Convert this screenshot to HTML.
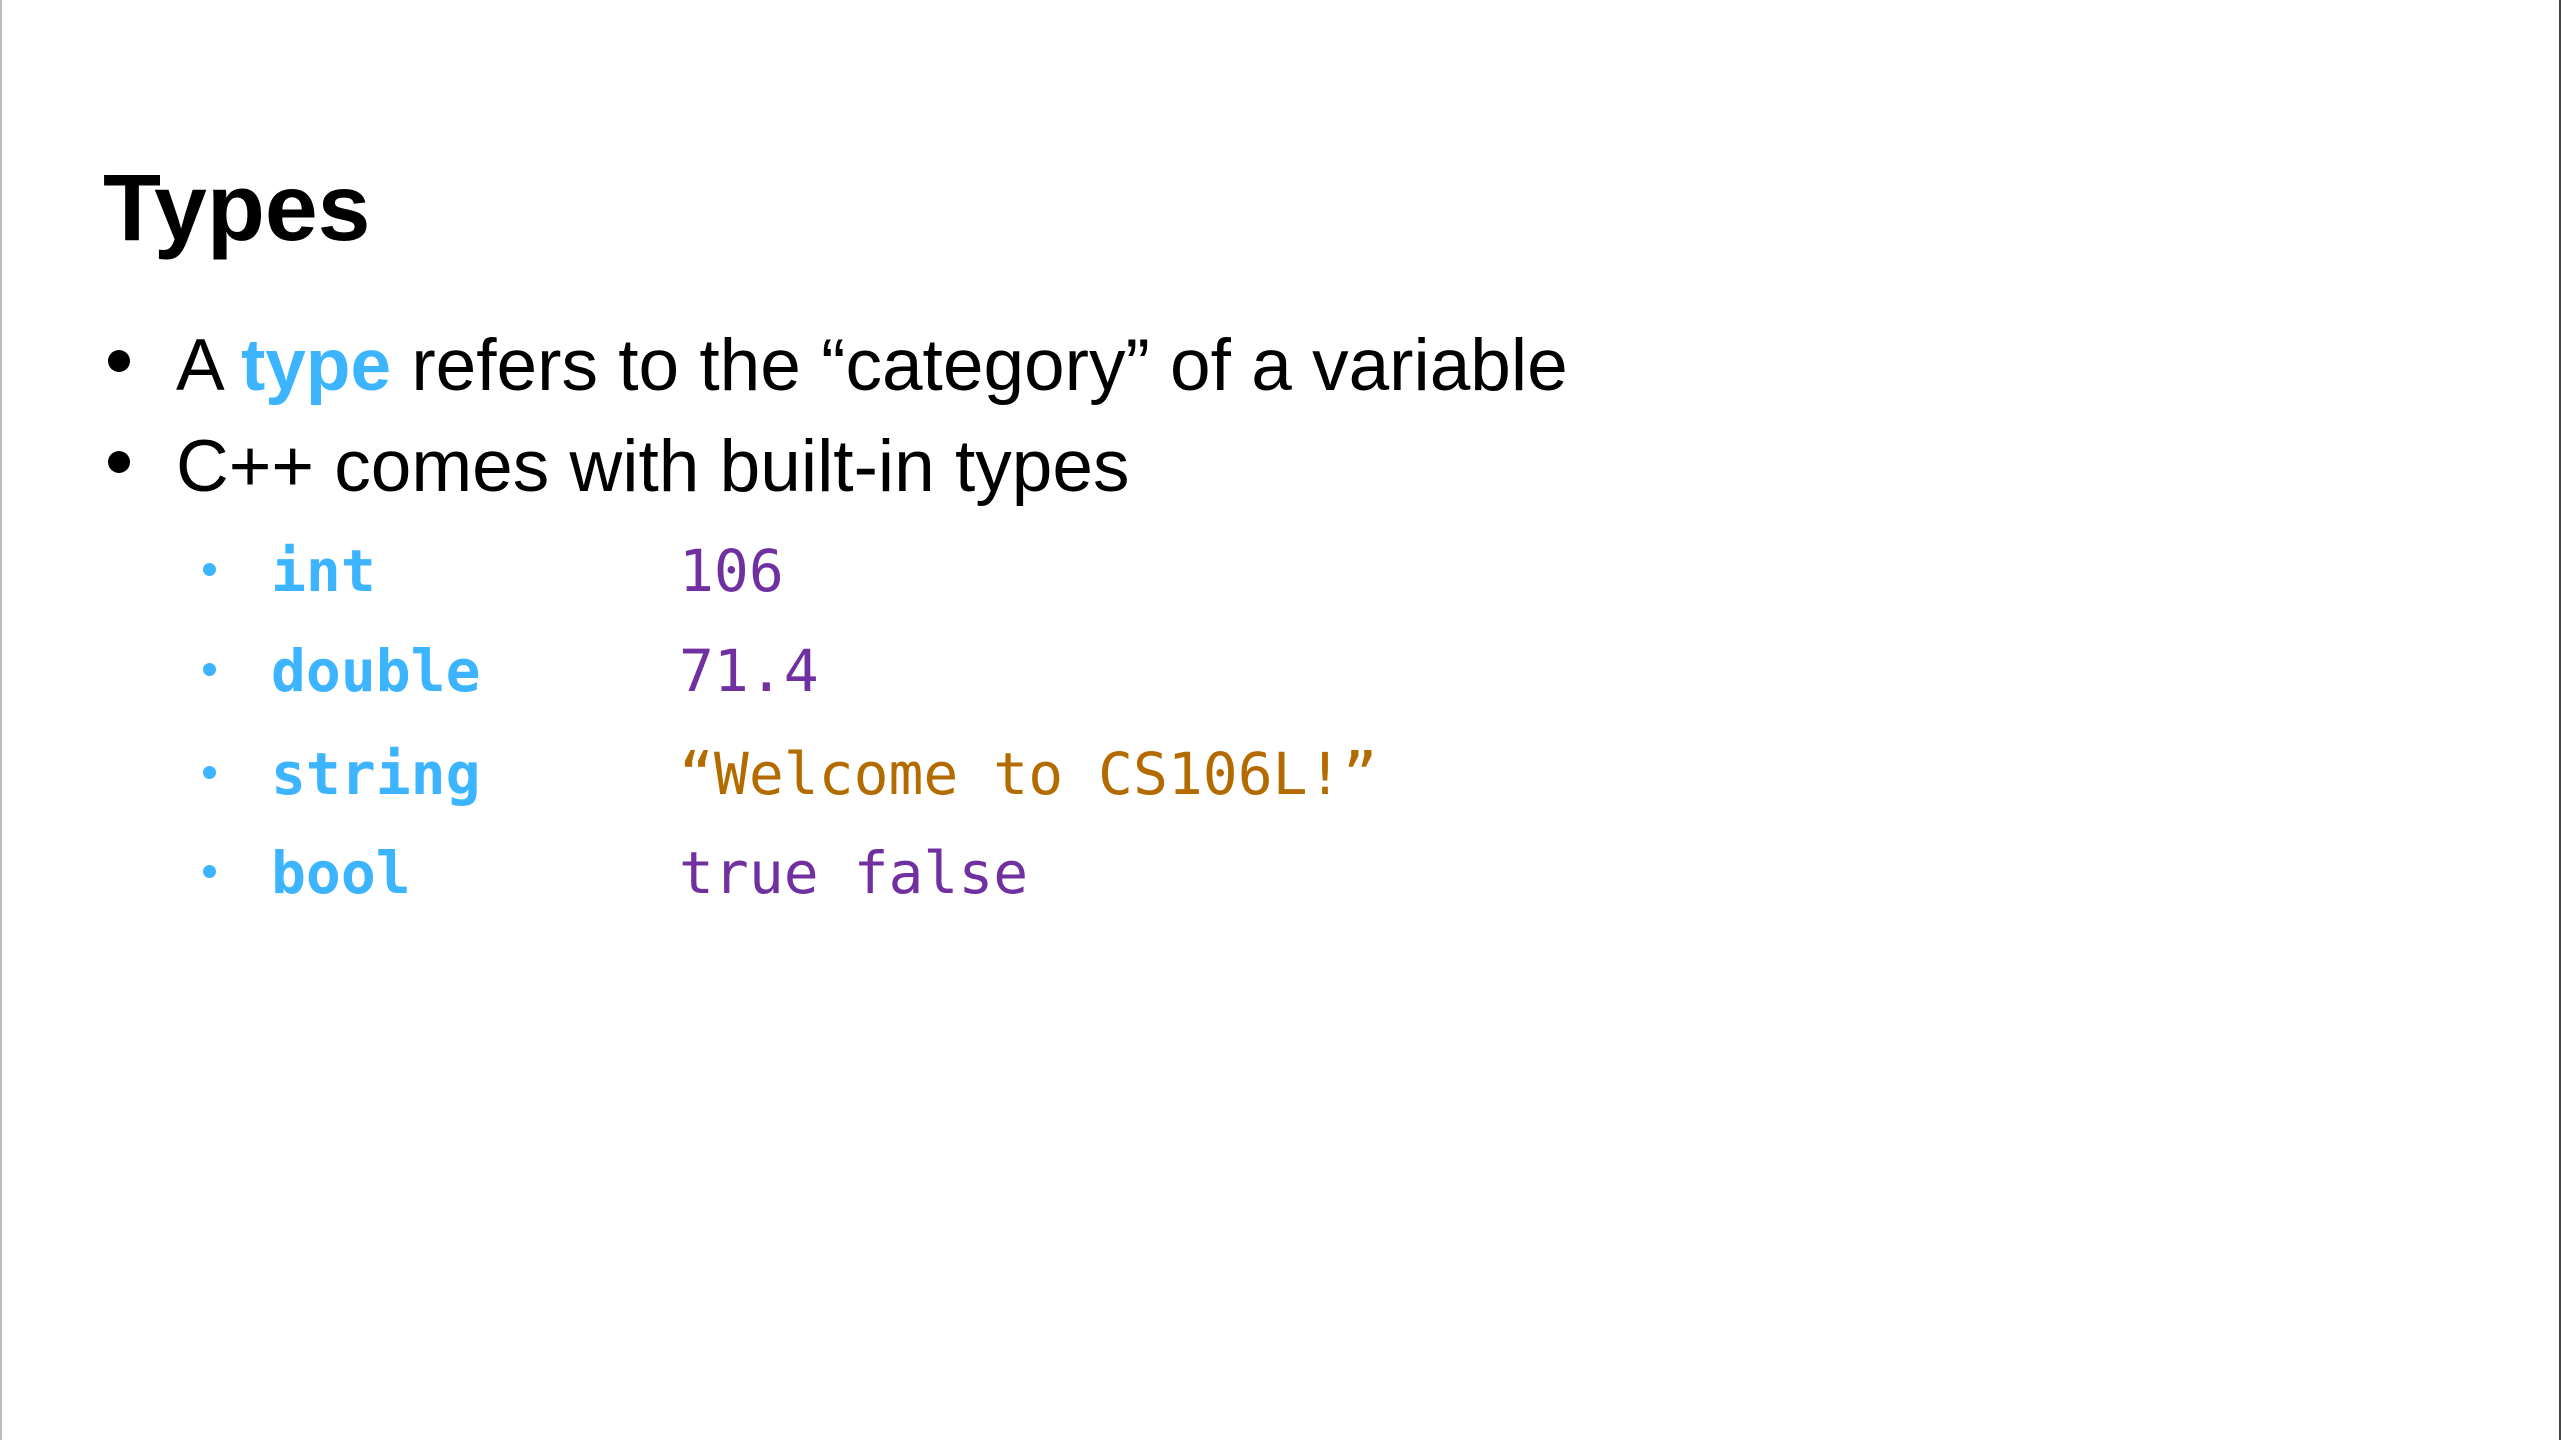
<!DOCTYPE html>
<html><head><meta charset="utf-8"><style>
html,body{margin:0;padding:0}
body{width:2561px;height:1440px;background:#fff;position:relative;overflow:hidden;font-family:"Liberation Sans",sans-serif}
.bl{position:absolute;left:0;top:0;width:2px;height:1440px;background:#bbb}
.br{position:absolute;right:0;top:0;width:2px;height:1440px;background:#444}
.t{position:absolute;white-space:nowrap;line-height:1}
.m{font-family:"DejaVu Sans Mono","Liberation Mono",monospace;font-size:58px}
.blue{color:#3cb4ff;font-weight:bold}
.pur{color:#7030a0}
.brn{color:#b36b00}
.dot{position:absolute;border-radius:50%;background:#000}
.sd{position:absolute;border-radius:50%;background:#3cb4ff;width:13px;height:13px}
</style></head><body>
<div class="bl"></div><div class="br"></div>
<div class="t" style="left:103px;top:161px;font-size:95px;font-weight:bold">Types</div>
<div class="dot" style="left:108px;top:350px;width:22px;height:22px"></div>
<div class="t" style="left:176px;top:329px;font-size:73px">A <span class="blue">type</span> refers to the “category” of a variable</div>
<div class="dot" style="left:108px;top:451px;width:22px;height:22px"></div>
<div class="t" style="left:176px;top:430px;font-size:73px">C++ comes with built-in types</div>
<div class="sd" style="left:203px;top:563px"></div>
<div class="t m blue" style="left:271px;top:542px">int</div>
<div class="t m pur" style="left:679px;top:542px">106</div>
<div class="sd" style="left:203px;top:663px"></div>
<div class="t m blue" style="left:271px;top:642px">double</div>
<div class="t m pur" style="left:679px;top:642px">71.4</div>
<div class="sd" style="left:203px;top:766px"></div>
<div class="t m blue" style="left:271px;top:745px">string</div>
<div class="t m brn" style="left:679px;top:745px">“Welcome to CS106L!”</div>
<div class="sd" style="left:203px;top:865px"></div>
<div class="t m blue" style="left:271px;top:844px">bool</div>
<div class="t m pur" style="left:679px;top:844px">true false</div>
</body></html>
